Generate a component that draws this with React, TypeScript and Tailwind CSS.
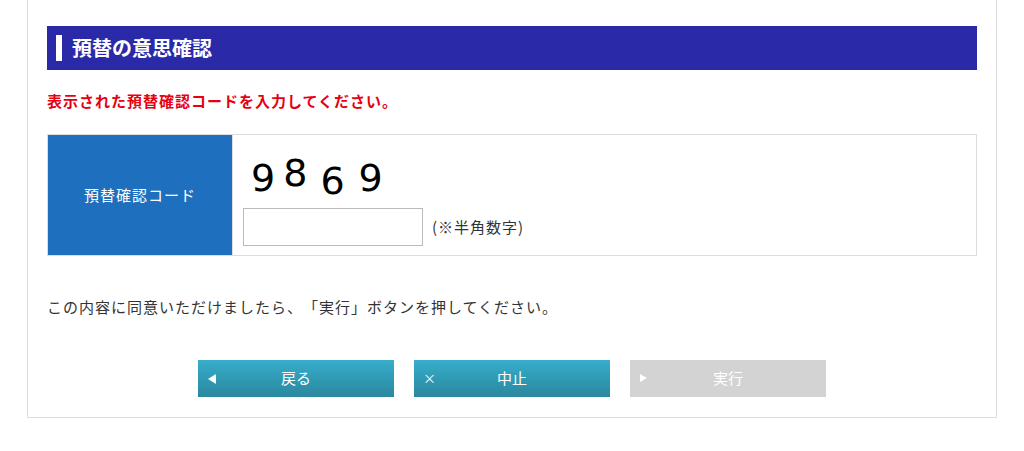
import React from 'react';

const font = { fontFamily: '"Noto Sans CJK JP", "Noto Sans", sans-serif' };

const digits = [
  { d: '9', cls: 'ml-0 mt-[5px]' },
  { d: '8', cls: 'ml-[8px] mt-0' },
  { d: '6', cls: 'ml-[13px] mt-[8px]' },
  { d: '9', cls: 'ml-[14px] mt-[5px]' },
];

export default function App() {
  return (
    <div className="w-[1024px] h-[451px] bg-white text-[#333] [text-spacing-trim:space-all]" style={font}>
      <div className="ml-[27px] w-[970px] border-x border-b border-[#dddddd] px-[19px] pt-[26px] pb-[20px]">
        {/* Title */}
        <div className="flex items-center h-[44px] bg-[#2a2aa9] pl-[9px]">
          <span className="w-[6px] h-[26px] bg-white" />
          <h2 className="ml-[10px] text-[20px] font-bold text-white leading-none">預替の意思確認</h2>
        </div>

        <p className="mt-[20px] text-[15px] tracking-[1px] font-bold text-[#e60012] leading-[22px]">
          表示された預替確認コードを入力してください。
        </p>

        {/* Code table */}
        <div className="mt-[22px] flex h-[122px] border border-[#dddddd]">
          <div className="w-[184px] bg-[#1e6fbd] flex items-center justify-center text-white text-[15px] tracking-[1px]">
            預替確認コード
          </div>
          <div className="flex-1 border-l border-[#dddddd] pl-[10px] pt-[22px]">
            <div className="flex h-[44px] pl-[8px]" style={{ fontFamily: '"DejaVu Sans", sans-serif' }}>
              {digits.map((x, i) => (
                <span key={i} className={`text-[38px] leading-[32px] text-black ${x.cls}`}>{x.d}</span>
              ))}
            </div>
            <div className="mt-[7px] flex items-center">
              <input className="w-[180px] h-[38px] border border-[#bbbbbb] outline-none" />
              <span className="ml-[9px] text-[15px] tracking-[1px] text-[#333]">(※半角数字)</span>
            </div>
          </div>
        </div>

        <p className="mt-[40px] text-[15px] tracking-[1px] text-[#333] leading-[22px]">
          この内容に同意いただけましたら、「実行」ボタンを押してください。
        </p>

        {/* Buttons */}
        <div className="mt-[42px] flex justify-center gap-[20px]">
          <button className="relative w-[196px] h-[37px] bg-gradient-to-b from-[#37aecb] to-[#2a879e] text-white text-[15px]">
            <span className="absolute left-[10px] top-[14px] w-0 h-0 border-y-[5px] border-y-transparent border-r-[8px] border-r-white" />
            戻る
          </button>
          <button className="relative w-[196px] h-[37px] bg-gradient-to-b from-[#37aecb] to-[#2a879e] text-white text-[15px]">
            <span className="absolute left-[9px] top-[8px] text-[13px]">×</span>
            中止
          </button>
          <button disabled className="relative w-[196px] h-[37px] bg-[#d3d3d3] text-white text-[15px]">
            <span className="absolute left-[10px] top-[14px] w-0 h-0 border-y-[4px] border-y-transparent border-l-[7px] border-l-white" />
            実行
          </button>
        </div>
      </div>
    </div>
  );
}
